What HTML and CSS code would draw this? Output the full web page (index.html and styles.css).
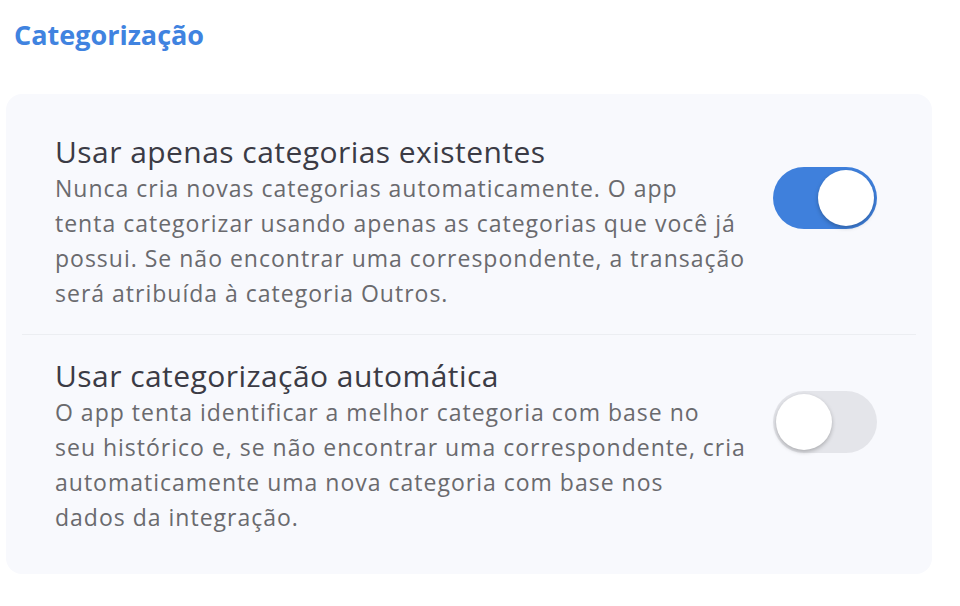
FILE: index.html
```html
<!DOCTYPE html>
<html lang="pt-BR">
<head>
<meta charset="utf-8">
<link rel="stylesheet" href="styles.css">
</head>
<body>
<h2 class="section-title">Categorização</h2>
<div class="card">
  <div class="row">
    <div class="text">
      <div class="title">Usar apenas categorias existentes</div>
      <div class="desc">Nunca cria novas categorias automaticamente. O app<br>tenta categorizar usando apenas as categorias que você já<br>possui. Se não encontrar uma correspondente, a transação<br>será atribuída à categoria Outros.</div>
    </div>
    <div class="toggle on"><span class="knob"></span></div>
  </div>
  <div class="row">
    <div class="text">
      <div class="title">Usar categorização automática</div>
      <div class="desc">O app tenta identificar a melhor categoria com base no<br>seu histórico e, se não encontrar uma correspondente, cria<br>automaticamente uma nova categoria com base nos<br>dados da integração.</div>
    </div>
    <div class="toggle"><span class="knob"></span></div>
  </div>
</div>
</body>
</html>
```

FILE: styles.css
```css
* { box-sizing: border-box; }
body {
  margin: 0;
  background: #ffffff;
  font-family: "Open Sans", Roboto, sans-serif;
  width: 960px;
  height: 606px;
  overflow: hidden;
}
.section-title {
  margin: 0;
  padding: 17px 0 0 14px;
  height: 94px;
  font-size: 27px;
  line-height: 36px;
  font-weight: 700;
  color: #4083e0;
}
.card {
  margin-left: 6px;
  width: 926px;
  background: #f8f9fd;
  border-radius: 16px;
  padding: 16px;
}
.row {
  height: 224px;
  display: flex;
  align-items: flex-start;
  justify-content: space-between;
  padding: 23px 39px 0 33px;
}
.row + .row {
  border-top: 1px solid #eceef2;
  padding-top: 22px;
}
.text {
  width: 700px;
  white-space: nowrap;
}
.title {
  font-size: 30px;
  line-height: 38px;
  letter-spacing: 0.45px;
  color: #3b3b45;
}
.desc {
  font-size: 23px;
  line-height: 35px;
  letter-spacing: 1px;
  color: #6a6a6e;
}
.toggle {
  margin-top: 34px;
  width: 104px;
  height: 62px;
  border-radius: 31px;
  background: #e4e5ea;
  position: relative;
  flex-shrink: 0;
}
.toggle.on { background: #3f80dc; }
.knob {
  position: absolute;
  top: 3px;
  left: 3px;
  width: 56px;
  height: 56px;
  border-radius: 50%;
  background: #fff;
  box-shadow: 0 2px 4px rgba(0,0,0,0.25);
}
.toggle.on .knob { left: 45px; }
```
